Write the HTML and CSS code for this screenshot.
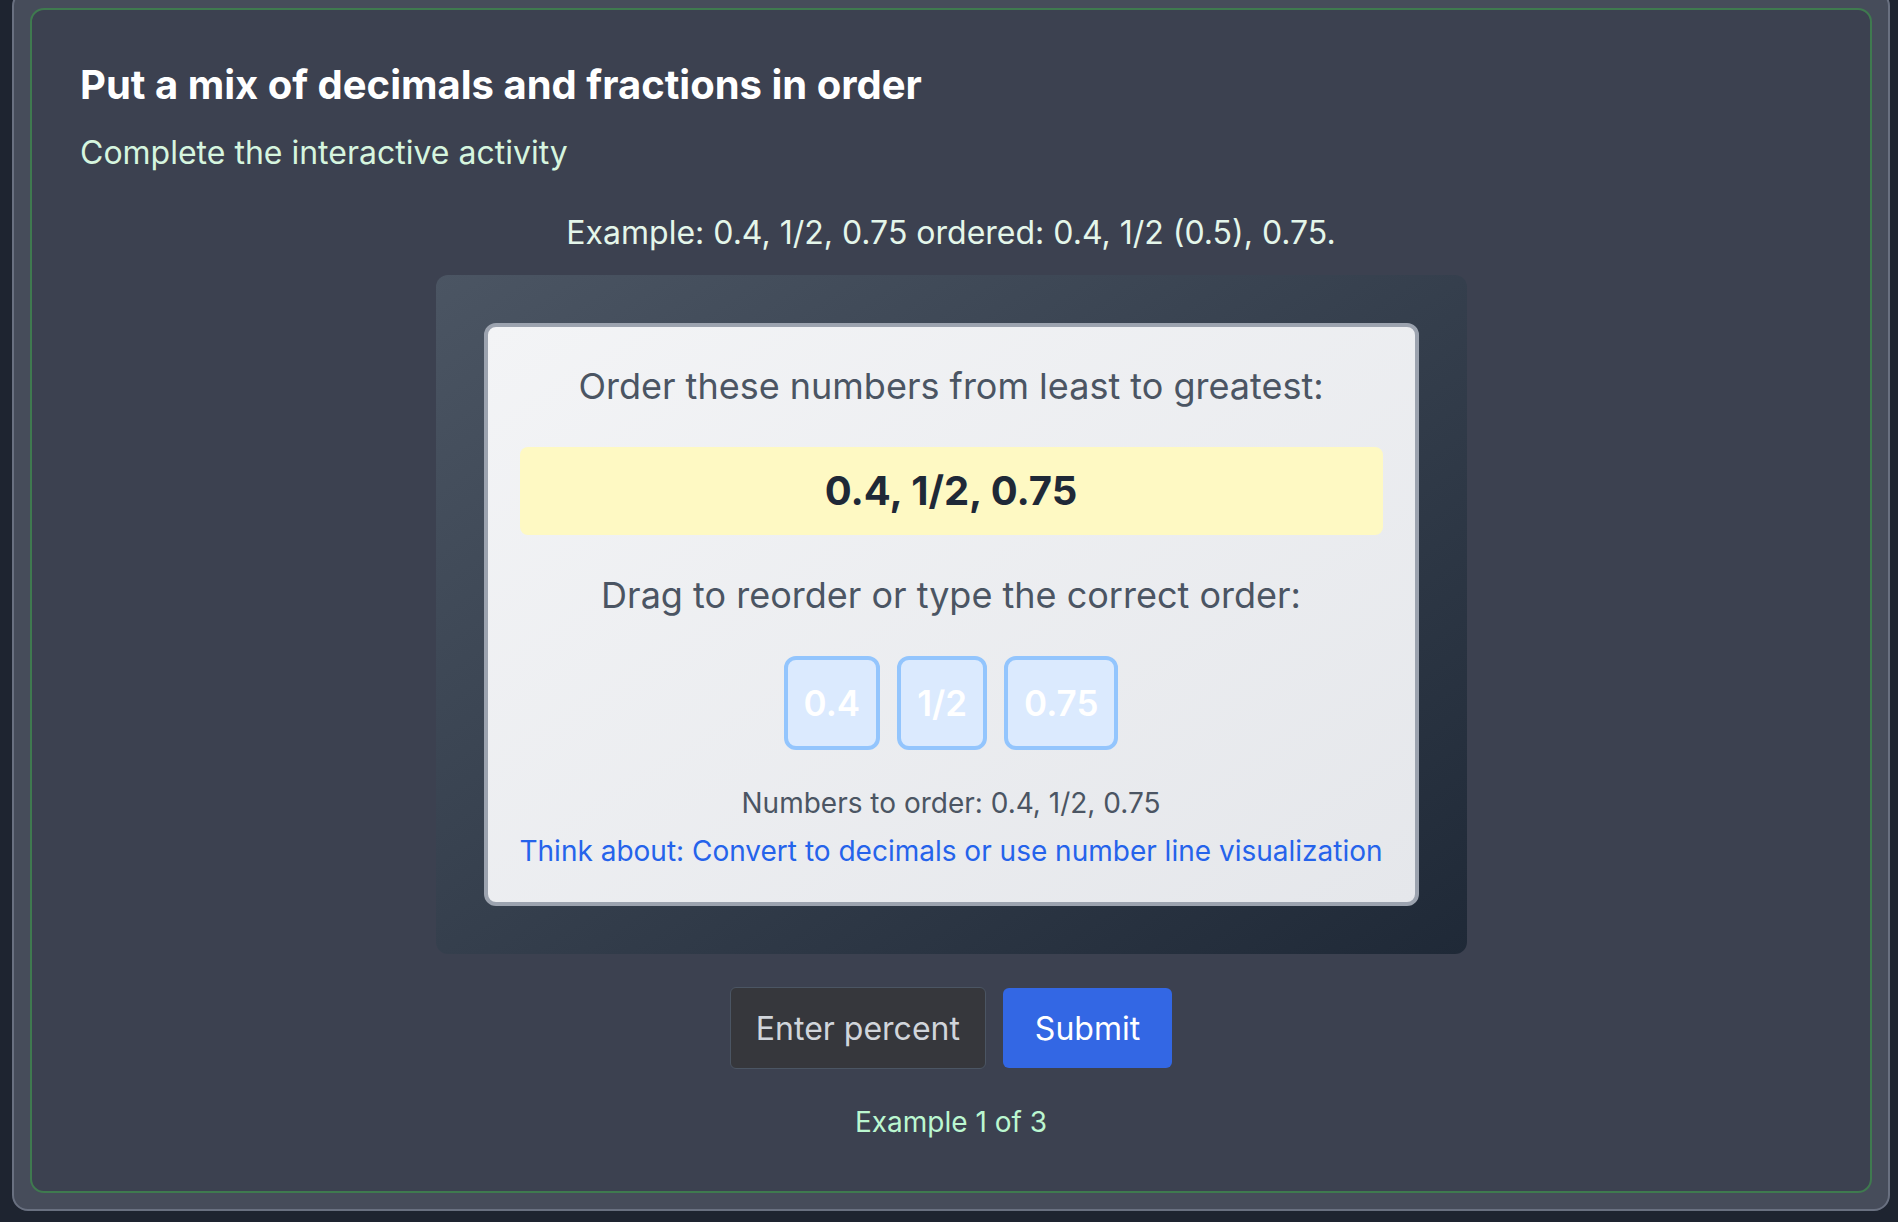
FILE: index.html
```html
<!DOCTYPE html>
<html lang="en">
<head>
<meta charset="utf-8">
<title>Put a mix of decimals and fractions in order</title>
<link rel="stylesheet" href="styles.css">
</head>
<body>
<div class="shell">
  <section class="lesson">
    <h1 class="title">Put a mix of decimals and fractions in order</h1>
    <p class="subtitle">Complete the interactive activity</p>
    <p class="example">Example: 0.4, 1/2, 0.75 ordered: 0.4, 1/2 (0.5), 0.75.</p>
    <div class="stage">
      <div class="card">
        <p class="prompt prompt-first">Order these numbers from least to greatest:</p>
        <div class="numbers">0.4, 1/2, 0.75</div>
        <p class="prompt">Drag to reorder or type the correct order:</p>
        <div class="tiles">
          <div class="tile">0.4</div>
          <div class="tile">1/2</div>
          <div class="tile">0.75</div>
        </div>
        <p class="info">Numbers to order: 0.4, 1/2, 0.75</p>
        <p class="hint">Think about: Convert to decimals or use number line visualization</p>
      </div>
    </div>
    <div class="answer">
      <input class="answer-input" type="text" placeholder="Enter percent">
      <button class="answer-submit" type="button">Submit</button>
    </div>
    <p class="progress">Example 1 of 3</p>
  </section>
</div>
</body>
</html>
```
FILE: styles.css
```css
html, body {
  background: #1e2430;
}
body {
  margin: 0 8px 0 12px;
  font-family: Inter, "Noto Sans", sans-serif;
}
.shell {
  margin-top: -10px;
  background: #464c5a;
  border: 2px solid #697080;
  border-radius: 16px;
  padding: 16px;
}
.lesson {
  background: #3c4150;
  border: 2px solid #3f7a4f;
  border-radius: 14px;
  padding: 48px;
}
.title {
  margin: 0 0 17px;
  font-size: 40px;
  line-height: 54px;
  font-weight: 700;
  color: #ffffff;
}
.subtitle {
  margin: 0 0 32px;
  font-size: 32px;
  line-height: 48px;
  color: #d6f5df;
}
.example {
  margin: 0 0 18px;
  font-size: 32px;
  line-height: 48px;
  color: #e4f6ea;
  text-align: center;
}
.stage {
  box-sizing: border-box;
  width: 1031px;
  margin: 0 auto 33px;
  padding: 48px;
  border-radius: 12px;
  background: linear-gradient(to bottom right, #4b5563, #1f2937);
}
.card {
  border: 4px solid #9ca3af;
  border-radius: 12px;
  padding: 32px 32px 30px;
  background: linear-gradient(to bottom right, #f3f4f6, #e5e7eb);
  text-align: center;
}
.prompt {
  margin: 0 0 34px;
  font-size: 36px;
  line-height: 54px;
  color: #4b5563;
}
.numbers {
  margin: 0 0 33px;
  padding: 14px;
  border-radius: 8px;
  background: #fef9c3;
  font-size: 40px;
  line-height: 60px;
  font-weight: 700;
  color: #1f2937;
}
.tiles {
  display: flex;
  justify-content: center;
  gap: 17px;
  margin-bottom: 32px;
}
.tile {
  padding: 16px;
  border: 4px solid #93c5fd;
  border-radius: 12px;
  background: #dbeafe;
  color: #ffffff;
  font-size: 35px;
  line-height: 54px;
  font-weight: 600;
}
.info {
  margin: 0 0 6px;
  font-size: 28px;
  line-height: 42px;
  color: #4b5563;
}
.hint {
  margin: 0 -8px;
  font-size: 28px;
  line-height: 42px;
  color: #2563eb;
  white-space: nowrap;
}
.answer {
  display: flex;
  justify-content: center;
  align-items: center;
  gap: 17px;
  margin-bottom: 32px;
}
.answer-input {
  box-sizing: border-box;
  width: 256px;
  height: 82px;
  padding: 0 20px 0 25px;
  border: 1px solid #4b5563;
  border-radius: 6px;
  background: #36373c;
  color: #f3f4f6;
  font-family: Inter, "Noto Sans", sans-serif;
  font-size: 32px;
  outline: none;
}
.answer-input::placeholder {
  color: #d1d5db;
  opacity: 1;
}
.answer-submit {
  height: 80px;
  padding: 0 32px;
  border: 0;
  border-radius: 6px;
  background: #3367e4;
  color: #ffffff;
  font-family: Inter, "Noto Sans", sans-serif;
  font-size: 32px;
  cursor: pointer;
}
.progress {
  margin: 0;
  font-size: 28px;
  line-height: 42px;
  color: #bbf7d0;
  text-align: center;
}
```
